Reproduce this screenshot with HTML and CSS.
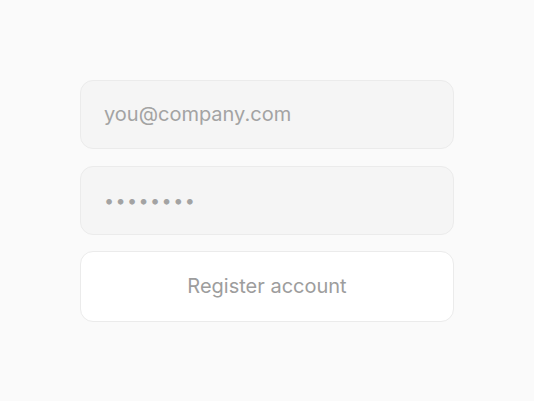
FILE: index.html
```html
<!DOCTYPE html>
<html>
  <head>
    <meta charset="UTF-8">
    <title>Register</title>
    <link rel="stylesheet" href="styles.css">
  </head>
  <body>
    <form class="register">
      <input class="field" type="email" placeholder="you@company.com" />
      <input class="field field-pass" type="text" placeholder="••••••••" />
      <button class="submit" type="button">Register account</button>
    </form>
  </body>
</html>
```

FILE: styles.css
```css
html,
body {
  height: 100%;
}

body {
  margin: 0;
  background: #fafafa;
  display: flex;
  align-items: center;
  justify-content: center;
  font-family: Inter, "Noto Sans", sans-serif;
}

.register {
  width: 374px;
  display: flex;
  flex-direction: column;
  gap: 16px;
}

.field,
.submit {
  box-sizing: border-box;
  width: 100%;
  margin: 0;
  border: 1px solid #ebebeb;
  border-radius: 13px;
  font-family: inherit;
  font-size: 20px;
  color: #9d9d9d;
  outline: none;
}

.field {
  height: 69px;
  padding: 0 23px;
  background: #f5f5f5;
}

.field + .field {
  margin-top: 1px;
}

.field::placeholder {
  color: #a3a3a3;
}

.field-pass::placeholder {
  letter-spacing: 1.4px;
  font-size: 18px;
}

.submit {
  height: 71px;
  background: #fff;
  cursor: pointer;
}
```
